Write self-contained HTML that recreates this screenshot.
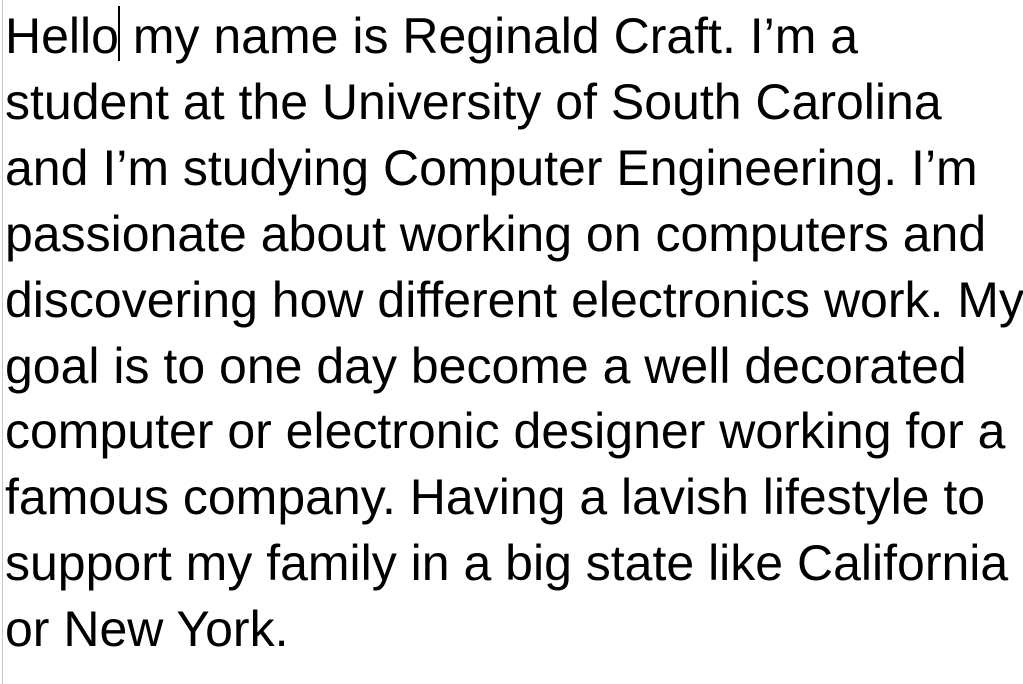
<!DOCTYPE html>
<html><head><style>
html,body{margin:0;padding:0;background:#fff;width:1023px;height:684px;overflow:hidden}
.b{position:absolute;left:2px;top:0;width:1px;height:684px;background:#c8c8c8}
.t{position:absolute;left:5px;top:4px;font-family:"Liberation Sans",Arial,sans-serif;font-size:50px;line-height:65.9px;color:#000;white-space:nowrap}
.c{position:absolute;left:118px;top:6px;width:2px;height:55px;background:#000}
</style></head><body>
<div class="b"></div>
<div class="t">Hello my name is Reginald Craft. I’m a<br>student at the University of South Carolina<br>and I’m studying Computer Engineering. I’m<br>passionate about working on computers and<br>discovering how different electronics work. My<br>goal is to one day become a well decorated<br>computer or electronic designer working for a<br>famous company. Having a lavish lifestyle to<br>support my family in a big state like California<br>or New York.</div>
<div class="c"></div>
</body></html>
